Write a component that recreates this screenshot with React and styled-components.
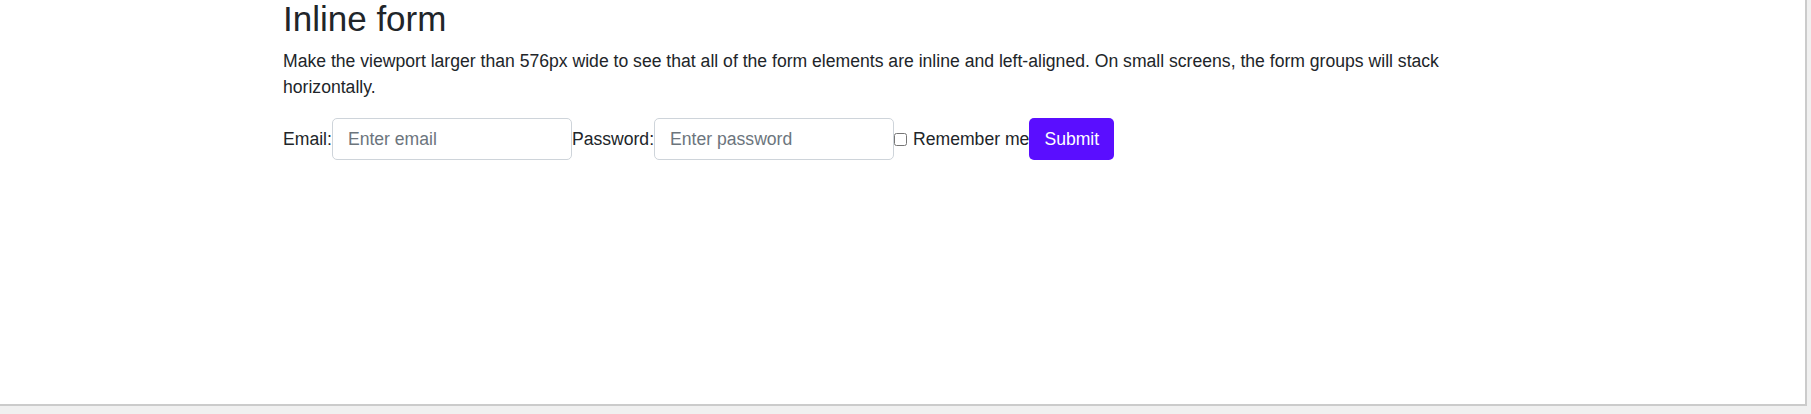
import React from "react";
import styled, { createGlobalStyle } from "styled-components";

const GlobalStyle = createGlobalStyle`
  html, body {
    margin: 0;
    padding: 0;
    background: #f0f0f0;
  }
  * {
    box-sizing: border-box;
  }
`;

const Page = styled.div`
  width: 1807px;
  height: 406px;
  background: #ffffff;
  border-right: 2px solid #cbcbcb;
  border-bottom: 2px solid #cbcbcb;
  font-family: "Liberation Sans", Arial, sans-serif;
  color: #212529;
  overflow: hidden;
`;

const Container = styled.div`
  margin-left: 283px;
  width: 1236px;
`;

const Title = styled.h2`
  margin: 0 0 11px;
  font-size: 35px;
  line-height: 38px;
  font-weight: 500;
`;

const Lead = styled.p`
  margin: 0 0 18px;
  font-size: 17.6px;
  line-height: 25.5px;
`;

const InlineForm = styled.form`
  display: flex;
  align-items: center;
`;

const Label = styled.label`
  font-size: 17.6px;
  line-height: 1.5;
`;

const TextBox = styled.input`
  width: 240px;
  height: 42px;
  padding: 0 15px;
  border: 1px solid #ced4da;
  border-radius: 5px;
  font-family: inherit;
  font-size: 17.6px;
  color: #495057;
  background: #fff;
  outline: none;

  &::placeholder {
    color: #6c757d;
  }
`;

const Check = styled.input`
  width: 13px;
  height: 13px;
  margin: 0 6px 0 0;
`;

const SubmitButton = styled.button`
  height: 42px;
  padding: 0 15px;
  border: none;
  border-radius: 5px;
  background: #5a0eff;
  color: #fff;
  font-family: inherit;
  font-size: 17.6px;
  cursor: pointer;
`;

export default function App() {
  return (
    <>
      <GlobalStyle />
      <Page>
        <Container>
          <Title>Inline form</Title>
          <Lead>
            Make the viewport larger than 576px wide to see that all of the form
            elements are inline and left-aligned. On small screens, the form
            groups will stack horizontally.
          </Lead>
          <InlineForm onSubmit={e => e.preventDefault()}>
            <Label htmlFor="email">Email:</Label>
            <TextBox id="email" type="email" placeholder="Enter email" />
            <Label htmlFor="pwd">Password:</Label>
            <TextBox id="pwd" type="password" placeholder="Enter password" />
            <Check type="checkbox" id="remember" />
            <Label htmlFor="remember">Remember me</Label>
            <SubmitButton type="submit">Submit</SubmitButton>
          </InlineForm>
        </Container>
      </Page>
    </>
  );
}
